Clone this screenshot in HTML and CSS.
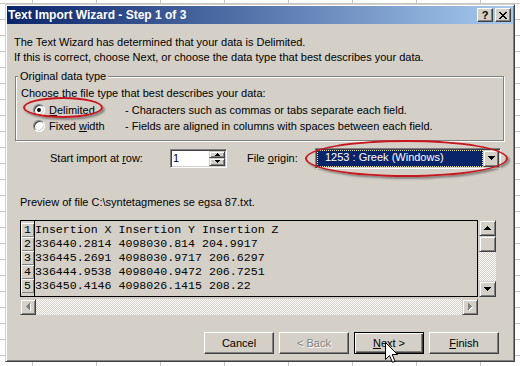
FILE: index.html
```html
<!DOCTYPE html>
<html lang="en">
<head>
  <meta charset="UTF-8">
  <title>Text Import Wizard - Step 1 of 3</title>
  <link rel="stylesheet" href="styles.css">
</head>
<body>
  <div class="dialog">
    <div class="titlebar">
      <span class="title">Text Import Wizard - Step 1 of 3</span>
      <div class="caption-buttons">
        <span class="cap-btn">?</span>
        <span class="cap-btn">
          <svg width="8" height="7" viewBox="0 0 8 7" shape-rendering="crispEdges"><path d="M0 0h2v1H0z M6 0h2v1H6z M1 1h2v1H1z M5 1h2v1H5z M2 2h4v1H2z M3 3h2v1H3z M2 4h4v1H2z M1 5h2v1H1z M5 5h2v1H5z M0 6h2v1H0z M6 6h2v1H6z" fill="#000"/></svg>
        </span>
      </div>
    </div>

    <div class="content">
      <p class="intro">The Text Wizard has determined that your data is Delimited.<br>If this is correct, choose Next, or choose the data type that best describes your data.</p>

      <fieldset class="group">
        <legend>Original data type</legend>
        <div class="group-body">
          <p class="choose">Choose the file type that best describes your data:</p>
          <div class="option first">
            <span class="radio checked"></span>
            <span class="opt-label"><u>D</u>elimited</span>
            <span class="opt-desc">- Characters such as commas or tabs separate each field.</span>
          </div>
          <div class="option">
            <span class="radio"></span>
            <span class="opt-label">Fixed <u>w</u>idth</span>
            <span class="opt-desc">- Fields are aligned in columns with spaces between each field.</span>
          </div>
        </div>
      </fieldset>

      <div class="settings">
        <span class="lbl-row">Start import at <u>r</u>ow:</span>
        <div class="spin">
          <span class="spin-value">1</span>
          <div class="spin-buttons">
            <span class="spin-btn"><svg width="5" height="3" viewBox="0 0 5 3" shape-rendering="crispEdges"><path d="M2 0h1v1h1v1h1v1H0V2h1V1h1z"/></svg></span>
            <span class="spin-btn"><svg width="5" height="3" viewBox="0 0 5 3" shape-rendering="crispEdges"><path d="M0 0h5v1H4v1H3v1H2V2H1V1H0z"/></svg></span>
          </div>
        </div>
        <span class="lbl-origin">File <u>o</u>rigin:</span>
        <div class="combo">
          <span class="combo-value">1253 : Greek (Windows)</span>
          <span class="combo-btn"><svg width="7" height="4" viewBox="0 0 7 4" shape-rendering="crispEdges"><path d="M0 0h7v1H6v1H5v1H4v1H3V3H2V2H1V1H0z"/></svg></span>
        </div>
      </div>

      <p class="preview-label">Preview of file C:\syntetagmenes se egsa 87.txt.</p>

      <div class="preview">
        <div class="preview-top">
          <div class="data">
            <div class="rownums">
              <span class="num">1</span>
              <span class="num">2</span>
              <span class="num">3</span>
              <span class="num">4</span>
              <span class="num">5</span>
            </div>
<pre class="lines">Insertion X Insertion Y Insertion Z
336440.2814 4098030.814 204.9917
336445.2691 4098030.9717 206.6297
336444.9538 4098040.9472 206.7251
336450.4146 4098026.1415 208.22</pre>
          </div>
          <div class="vscroll">
            <span class="sb-btn"><svg width="7" height="4" viewBox="0 0 7 4" shape-rendering="crispEdges"><path d="M3 0h1v1h1v1h1v1h1v1H0V3h1V2h1V1h1z"/></svg></span>
            <span class="sb-btn"></span>
            <span class="track"></span>
            <span class="sb-btn"><svg width="7" height="4" viewBox="0 0 7 4" shape-rendering="crispEdges"><path d="M0 0h7v1H6v1H5v1H4v1H3V3H2V2H1V1H0z"/></svg></span>
          </div>
        </div>
        <div class="hscroll">
          <span class="sb-btn"><svg class="off" width="5" height="8" viewBox="0 0 5 8" shape-rendering="crispEdges"><path class="hl" d="M4 1h1v7H4V7H3V6H2V5H1V4h1V3h1V2h1z"/><path d="M3 0h1v7H3V6H2V5H1V4H0V3h1V2h1V1h1z"/></svg></span>
          <span class="track"></span>
          <span class="sb-btn"><svg class="off" width="5" height="8" viewBox="0 0 5 8" shape-rendering="crispEdges"><path class="hl" d="M1 1h1v1h1v1h1v1h1v1H4v1H3v1H2v1H1z"/><path d="M0 0h1v1h1v1h1v1h1v1H3v1H2v1H1v1H0z"/></svg></span>
        </div>
      </div>

      <div class="buttons">
        <span class="btn">Cancel</span>
        <span class="btn disabled">&lt; Back</span>
        <span class="btn default"><u>N</u>ext &gt;</span>
        <span class="btn"><u>F</u>inish</span>
      </div>
    </div>

    <div class="ellipse e-delim"></div>
    <div class="ellipse e-origin"></div>
    <svg class="cursor" width="13" height="21" viewBox="0 0 13 21"><path d="M0.5 0.5V17.5L4.5 13.5L7.5 20.3L10 19.2L7.2 12.5H12.5Z" fill="#fff" stroke="#000" stroke-width="1"/></svg>
  </div>
</body>
</html>
```

FILE: styles.css
```css
html,
body {
  margin: 0;
}
body {
  padding: 4px 0 0 5px;
  height: 366px;
  box-sizing: border-box;
  overflow: hidden;
  background-color: #fff;
  background-image: linear-gradient(to right, #c6c6c6 1px, transparent 1px),
    linear-gradient(to bottom, #c6c6c6 1px, transparent 1px);
  background-size: 64px 16px;
  background-position: 32px 3px;
  font-family: "Liberation Sans", Arial, sans-serif;
  font-size: 11px;
  color: #000;
}
p {
  margin: 0;
}

/* window frame */
.dialog {
  position: relative;
  width: 510px;
  height: 358px;
  box-sizing: border-box;
  padding: 1px;
  background: #d4d0c8;
  border: 1px solid;
  border-color: #d4d0c8 #404040 #404040 #d4d0c8;
  box-shadow: inset 1px 1px #fff, inset -1px -1px #808080;
}
.titlebar {
  height: 18px;
  display: flex;
  align-items: center;
  justify-content: space-between;
  padding: 0 2px 0 1px;
  background: linear-gradient(to right, #0a246a, #a6caf0);
  color: #fff;
  font-weight: bold;
  font-size: 12px;
}
.caption-buttons {
  display: flex;
  gap: 2px;
}
.cap-btn {
  width: 16px;
  height: 14px;
  box-sizing: border-box;
  display: flex;
  align-items: center;
  justify-content: center;
  background: #d4d0c8;
  border: 1px solid;
  border-color: #fff #404040 #404040 #fff;
  box-shadow: inset -1px -1px #808080;
  color: #000;
  font-size: 11px;
}

.content {
  padding: 0 7px;
}
.intro {
  margin-top: 11px;
  line-height: 15px;
}

/* group box */
.group {
  margin: 5px 0 0 1px;
  width: 489px;
  box-sizing: border-box;
  padding: 0 0 6px 2px;
  border: 1px solid #808080;
  box-shadow: inset 1px 1px #fff, 1px 1px #fff;
}
.group legend {
  padding: 0 2px;
  line-height: 12px;
  background: #d4d0c8;
}
.group-body {
  padding-left: 3px;
}
.choose {
  margin-top: 4px;
  line-height: 15px;
}
.option {
  display: flex;
  align-items: center;
  height: 16px;
  padding-left: 12px;
}
.option.first {
  margin-top: 1px;
}
.radio {
  position: relative;
  width: 12px;
  height: 12px;
  box-sizing: border-box;
  border-radius: 50%;
  border: 1px solid;
  border-color: #808080 #fff #fff #808080;
  box-shadow: inset 1px 1px #404040, inset -1px -1px #d4d0c8;
  background: #fff;
  margin-right: 4px;
}
.radio.checked::after {
  content: "";
  position: absolute;
  left: 3px;
  top: 3px;
  width: 4px;
  height: 4px;
  border-radius: 50%;
  background: #000;
}
.opt-label {
  width: 76px;
}

/* import settings */
.settings {
  display: flex;
  align-items: center;
  height: 20px;
  margin-top: 7px;
  padding-left: 36px;
}
.lbl-row {
  width: 120px;
}
.lbl-origin {
  width: 68px;
  margin-left: 20px;
}
.spin,
.combo {
  display: flex;
  box-sizing: border-box;
  padding: 1px;
  border: 1px solid;
  border-color: #808080 #fff #fff #808080;
  box-shadow: inset 1px 1px #404040, inset -1px -1px #d4d0c8;
  background: #fff;
}
.spin {
  width: 57px;
  height: 19px;
}
.spin-value {
  flex: 1;
  padding-left: 1px;
  line-height: 15px;
}
.spin-buttons {
  display: flex;
  flex-direction: column;
  width: 16px;
}
.spin-btn,
.combo-btn,
.sb-btn {
  display: flex;
  align-items: center;
  justify-content: center;
  box-sizing: border-box;
  background: #d4d0c8;
  border: 1px solid;
  border-color: #d4d0c8 #404040 #404040 #d4d0c8;
  box-shadow: inset 1px 1px #fff, inset -1px -1px #808080;
}
.spin-btn {
  flex: 1;
}
.combo {
  width: 186px;
  height: 21px;
}
.combo-value {
  flex: 1;
  background: #0a246a;
  color: #fff;
  padding-left: 8px;
  line-height: 15px;
  outline: 1px dotted #e6e0a0;
  outline-offset: -1px;
}
.combo-btn {
  width: 16px;
}

/* preview */
.preview-label {
  margin: 27px 0 0 6px;
  line-height: 15px;
}
.preview {
  margin: 10px 0 0 6px;
  width: 476px;
}
.preview-top {
  display: flex;
  gap: 1px;
  height: 77px;
}
.data {
  width: 458px;
  box-sizing: border-box;
  display: flex;
  border: 1px solid #000;
  background: #d4d0c8;
}
.rownums {
  display: flex;
  flex-direction: column;
  width: 13px;
  padding-top: 2px;
  border-right: 1px solid #000;
}
.num {
  height: 14px;
  box-sizing: border-box;
  box-shadow: inset 1px 1px #fff, inset -1px -1px #808080;
  font-family: "Liberation Mono", "Courier New", monospace;
  font-size: 11.6px;
  line-height: 14px;
  text-align: center;
}
.lines {
  margin: 0;
  padding-top: 2px;
  font-family: "Liberation Mono", "Courier New", monospace;
  font-size: 11.6px;
  line-height: 14px;
}
.vscroll {
  display: flex;
  flex-direction: column;
  width: 17px;
}
.vscroll .sb-btn {
  height: 16px;
}
.track {
  flex: 1;
  background: repeating-conic-gradient(#fff 0 25%, #d4d0c8 0 50%) 0 0 / 2px 2px;
}
.hscroll {
  display: flex;
  width: 458px;
  height: 16px;
  margin-top: 2px;
}
.hscroll .sb-btn {
  width: 16px;
}
.off path {
  fill: #808080;
}
.off path.hl {
  fill: #fff;
}

/* command buttons */
.buttons {
  display: flex;
  justify-content: flex-end;
  gap: 5px;
  margin-top: 17px;
  padding-right: 7px;
}
.btn {
  width: 70px;
  height: 22px;
  box-sizing: border-box;
  display: flex;
  align-items: center;
  justify-content: center;
  background: #d4d0c8;
  border: 1px solid;
  border-color: #fff #404040 #404040 #fff;
  box-shadow: inset -1px -1px #808080;
}
.btn.default {
  border-color: #000;
  box-shadow: inset 1px 1px #fff, inset -1px -1px #404040, inset -2px -2px #808080;
}
.btn.disabled {
  color: #808080;
  text-shadow: 1px 1px #fff;
}

/* annotations drawn over the dialog */
.ellipse {
  position: absolute;
  box-sizing: border-box;
  border: 2px solid #c8161e;
  border-radius: 50%;
  box-shadow: 2px 2px 2px rgba(0, 0, 0, 0.35);
}
.e-delim {
  left: 17px;
  top: 92px;
  width: 80px;
  height: 21px;
}
.e-origin {
  left: 299px;
  top: 135px;
  width: 203px;
  height: 37px;
}
.cursor {
  position: absolute;
  left: 379px;
  top: 337px;
}
```
